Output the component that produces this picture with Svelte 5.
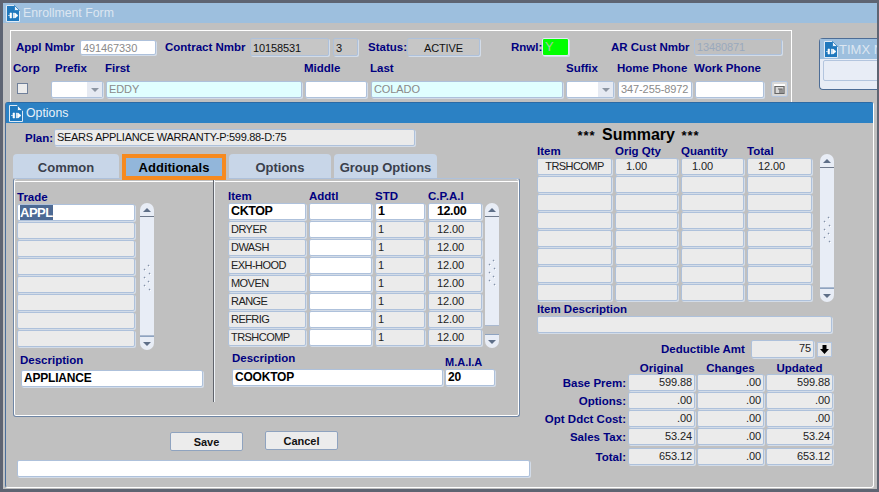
<script>
  const trade = ['APPL', '', '', '', '', '', '', ''];
  const items = ['DRYER', 'DWASH', 'EXH-HOOD', 'MOVEN', 'RANGE', 'REFRIG', 'TRSHCOMP'];
  const summaryBlank = [1, 2, 3, 4, 5, 6, 7];
  const totals = [
    ['Base Prem:', '599.88', '.00', '599.88'],
    ['Options:', '.00', '.00', '.00'],
    ['Opt Ddct Cost:', '.00', '.00', '.00'],
    ['Sales Tax:', '53.24', '.00', '53.24'],
    ['Total:', '653.12', '.00', '653.12']
  ];
  const gripDots = [[1, 9], [5, 5], [6, 13], [1, 17], [5, 21], [1, 25], [6, 29]];
</script>

{#snippet winIcon()}
  <svg class="winicon" width="14" height="17" viewBox="0 0 14 17">
    <path d="M.5 .5H8.5L13.5 5.5V16.5H.5Z" fill="#1f78bd" stroke="#dfeaf5" stroke-width="1"/>
    <path d="M8.5 .5V5.5H13.5Z" fill="#eaf2fa" stroke="#1f78bd" stroke-width=".8"/>
    <path d="M2 10.5H4M4 8H5.6V13H4ZM7.5 8H8.4V13H7.5ZM9 8L12 10.5L9 13Z" fill="#fff" stroke="#fff" stroke-width=".6"/>
  </svg>
{/snippet}

{#snippet scroll(height, thumb)}
  <div class="scroll" style="height:{height}px">
    <div class="cap up"><i></i></div>
    <div class="track" style="height:{thumb}px">
      <svg class="grip" width="9" height="32" viewBox="0 0 9 32">
        {#each gripDots as d}
          <path d="M{d[0]} {d[1] + 1}L{d[0] + 1} {d[1]}" stroke="#8492a8" stroke-width="1.2"/>
          <path d="M{d[0] + 1} {d[1] + 2}L{d[0] + 2} {d[1] + 1}" stroke="#fff" stroke-width="1"/>
        {/each}
      </svg>
    </div>
    <div class="spacer"></div>
    <div class="cap down"><i></i></div>
  </div>
{/snippet}

<div class="desktop">
  <header class="maintitle">{@render winIcon()}<span>Enrollment Form</span></header>

  <section class="enroll">
    <div class="row1">
      <label class="l1">Appl Nmbr</label><div class="f w76 white dim">491467330</div>
      <label class="l2">Contract Nmbr</label><div class="f w79 silverf">10158531</div><div class="f w25 silverf">3</div>
      <label class="l3">Status:</label><div class="f w73 silverf ctr">ACTIVE</div>
      <label class="l4">Rnwl:</label><div class="f green">Y</div>
      <label class="l5">AR Cust Nmbr</label><div class="f w88 silver dimblue">13480871</div>
    </div>
    <div class="row2">
      <label style="width:42px">Corp</label><label style="width:50px">Prefix</label><label style="width:199px">First</label><label style="width:66px">Middle</label><label style="width:196px">Last</label><label style="width:51px">Suffix</label><label style="width:77px">Home Phone</label><label>Work Phone</label>
    </div>
    <div class="row3">
      <div class="check"></div>
      <div class="f combo"><span class="drop"><i></i></span></div>
      <div class="f cyan dim w196">EDDY</div>
      <div class="f white w62"></div>
      <div class="f cyan dim w192">COLADO</div>
      <div class="f combo suf"><span class="drop"><i></i></span></div>
      <div class="f white dim w74">347-255-8972</div>
      <div class="f white w69"></div>
      <div class="calc"><svg width="11" height="10" viewBox="0 0 11 10"><path d="M0 0H11V2H0Z" fill="#fff"/><path d="M1 2.5H10V9.5H1ZM4 5H8V9.5M6 5V9.5" fill="none" stroke="#666" stroke-width="1.2"/></svg></div>
    </div>
  </section>

  <aside class="timx">
    <header>{@render winIcon()}<span>TIMX N</span></header>
    <div class="timxfield"></div>
  </aside>

  <section class="options">
    <header class="opttitle">{@render winIcon()}<span>Options</span></header>
    <div class="optbody">
      <div class="leftcol">
        <div class="plan"><label>Plan:</label><div class="f planf">SEARS APPLIANCE WARRANTY-P:599.88-D:75</div></div>
        <nav class="tabs">
          <div class="tab w106">Common</div>
          <div class="tab active">Additionals</div>
          <div class="tab w102">Options</div>
          <div class="tab w103">Group Options</div>
        </nav>
        <div class="panel">
          <div class="tradecol">
            <div class="tradelist">
              <div>
                <label class="hd">Trade</label>
                <div class="f w118 white big"><span class="sel">APPL</span></div>
                {#each trade.slice(1) as t}<div class="f w118 grey mt"></div>{/each}
              </div>
              {@render scroll(145, 119)}
            </div>
            <label class="hd desc1">Description</label>
            <div class="f white bold w182">APPLIANCE</div>
          </div>
          <div class="divider"></div>
          <div class="itemcol">
            <div class="itemwrap">
              <div>
                <div class="grid itemhd"><label>Item</label><label>Addtl</label><label>STD</label><label>C.P.A.I</label></div>
                <div class="grid">
                  <div class="f white bigb">CKTOP</div><div class="f white"></div><div class="f white bigb">1</div><div class="f white bigb pad8">12.00</div>
                </div>
                {#each items as it}
                  <div class="grid mt">
                    <div class="f grey tight">{it}</div><div class="f white"></div><div class="f grey">1</div><div class="f grey pad8">12.00</div>
                  </div>
                {/each}
              </div>
              <div class="itemscroll">{@render scroll(145, 109)}</div>
            </div>
            <div class="descrow">
              <div><label class="hd d2">Description</label><div class="f white bold w211">COOKTOP</div></div>
              <div class="maia"><label class="hd small">M.A.I.A</label><div class="f white bold w50">20</div></div>
            </div>
          </div>
        </div>
        <div class="buttons"><button class="save">Save</button><button class="cancel">Cancel</button></div>
        <div class="f white status"></div>
      </div>

      <div class="rightcol">
        <h2><span>***</span> Summary <span>***</span></h2>
        <div class="sumwrap">
          <div>
            <div class="sumgrid sumhd"><label>Item</label><label>Orig Qty</label><label>Quantity</label><label>Total</label></div>
            <div class="sumgrid">
              <div class="f grey ctr tight">TRSHCOMP</div><div class="f grey q">1.00</div><div class="f grey q">1.00</div><div class="f grey q">12.00</div>
            </div>
            {#each summaryBlank as r}
              <div class="sumgrid mt"><div class="f grey"></div><div class="f grey"></div><div class="f grey"></div><div class="f grey"></div></div>
            {/each}
          </div>
          <div class="sumscroll">{@render scroll(146, 120)}</div>
        </div>
        <label class="hd itemdesc">Item Description</label>
        <div class="f grey w295"></div>
        <div class="ded">
          <label>Deductible Amt</label>
          <div class="f grey num w63">75</div>
          <div class="arrowbtn"><svg width="11" height="11" viewBox="0 0 11 11"><path d="M3.5 1H7.5V5H10L5.5 10L1 5H3.5Z" fill="#000"/></svg></div>
        </div>
        <div class="totals tothd"><span></span><label>Original</label><label>Changes</label><label>Updated</label></div>
        {#each totals as t, i}
          <div class="totals" class:gap={i > 0} class:gaplast={i === 4}>
            <label class="rowl">{t[0]}</label>
            <div class="f grey num">{t[1]}</div><div class="f grey num">{t[2]}</div><div class="f grey num">{t[3]}</div>
          </div>
        {/each}
      </div>
    </div>
  </section>
</div>

<style>
  :global(body) { margin: 0; }
  .desktop {
    position: relative; width: 879px; height: 492px; box-sizing: border-box; overflow: hidden;
    background: #c0c0c0; font: 11px "Liberation Sans", Arial, sans-serif; color: #222;
    border-top: 3px solid #5e6472; border-left: 3px solid #5e6472; border-right: 2px solid #5e6472; border-bottom: 3px solid #5e6472;
  }
  label { font-weight: bold; font-size: 11.5px; color: #000080; white-space: nowrap; display: block; line-height: 14px; }
  .winicon { flex: none; margin-right: 3px; }

  .maintitle { height: 20px; background: #9dbfde; color: #dce6f1; display: flex; align-items: center; font-size: 12.3px; padding-left: 3px; }

  .f {
    box-sizing: border-box; height: 17px; line-height: 15px; border: 1px solid #aec1db; border-radius: 2px;
    padding: 0 2px; font-size: 11px; letter-spacing: -.1px; white-space: nowrap; overflow: hidden; flex: none;
    box-shadow: 1px 1px 0 #d3dce8;
  }
  .white { background: #fff; color: #111; }
  .grey { background: #ebebeb; color: #222; }
  .silverf { background: #c6c6c6; color: #111; }
  .silver { background: #c0c0c0; }
  .cyan { background: #e0ffff; }
  .dim { color: #8a8a8a; }
  .dimblue { color: #9aa9bd; }
  .ctr { text-align: center; }
  .bold { font-weight: bold; font-size: 12px; letter-spacing: -.2px; color: #000; }
  .num { text-align: right; }
  .mt { margin-top: 1px; }
  .tight { letter-spacing: -.55px; }

  .enroll {
    position: absolute; left: 7px; top: 27px; width: 782px; height: 80px; box-sizing: border-box;
    border-top: 1px solid #fff; border-left: 1px solid #fff; border-right: 1px solid #fff;
    padding-top: 7px;
  }
  .row1 { display: flex; align-items: center; height: 18px; }
  .row1 label { line-height: 16px; }
  .l1 { margin-left: 5px; width: 64px; }
  .l2 { margin-left: 9px; width: 85px; }
  .l3 { margin-left: 10px; width: 39px; }
  .l4 { margin-left: 31px; width: 31px; }
  .l5 { margin-left: 42px; width: 83px; }
  .w76 { width: 76px; height: 15px; line-height: 14px; }
  .w79 { width: 79px; height: 18px; line-height: 18px; }
  .w25 { width: 25px; height: 18px; line-height: 18px; margin-left: 4px; }
  .w73 { width: 73px; height: 18px; line-height: 18px; }
  .green { width: 27px; height: 18px; background: #00ff00; color: #a6c8a6; border-color: #e3ebf5; font-size: 13px; }
  .w88 { width: 88px; height: 16px; line-height: 14px; }
  .row2 { display: flex; margin-top: 5px; padding-left: 2px; }
  .row3 { display: flex; align-items: flex-start; margin-top: 6px; padding-left: 6px; height: 17px; }
  .check { width: 9px; height: 9px; margin-top: 2px; background: #ececec; border: 1px solid #70809a; margin-right: 23px; flex: none; }
  .combo { width: 52px; background: #fff; display: flex; justify-content: flex-end; padding: 0; margin-right: 3px; }
  .suf { width: 48px; margin-left: 3px; margin-right: 4px; }
  .drop { width: 15px; background: #e6eaf2; display: flex; align-items: center; justify-content: center; }
  .drop i { border: 4px solid transparent; border-top: 4px solid #8d96a3; border-bottom: 0; }
  .w196 { width: 196px; margin-right: 3px; }
  .w62 { width: 62px; margin-right: 4px; }
  .w192 { width: 192px; }
  .w74 { width: 74px; margin-right: 3px; }
  .w69 { width: 69px; margin-right: 7px; }
  .calc { width: 17px; height: 16px; box-sizing: border-box; background: #d8d8d8; border: 1px solid #b3c5de; border-radius: 2px; display: flex; align-items: center; justify-content: center; }

  .timx { position: absolute; left: 816px; top: 35px; width: 70px; height: 52px; background: #e8edf6; border: 1px solid #4d6d96; border-right: 0; border-radius: 4px 0 0 4px; box-sizing: border-box; }
  .timx header { height: 20px; background: #9dbfde; color: #dce6f1; display: flex; align-items: center; font-size: 13px; padding-left: 4px; }
  .timx .winicon { margin-right: 1px; }
  .timxfield { margin: 1px 0 0 3px; height: 19px; background: #e8edf6; border: 1px solid #b3c5de; border-radius: 2px; }

  .options {
    position: absolute; left: 2px; top: 99px; width: 869px; height: 386px; box-sizing: border-box;
    background: #c0c0c0; border: 1px solid #4a6f9c; border-top-color: #2b6aa5; border-right-color: #fff; border-bottom-color: #fff;
    border-radius: 3px;
  }
  .opttitle { height: 20px; background: #2b81c4; color: #e8f2fa; display: flex; align-items: center; font-size: 12.3px; padding-left: 3px; }
  .optbody { display: flex; }
  .leftcol { width: 530px; flex: none; }
  .plan { display: flex; align-items: center; margin: 6px 0 0 19px; height: 17px; }
  .plan label { width: 29px; }
  .planf { width: 361px; background: #ebebeb; color: #111; letter-spacing: -.3px; }
  .tabs { display: flex; margin: 8px 0 0 7px; gap: 3px; height: 26px; position: relative; z-index: 1; }
  .tab {
    box-sizing: border-box; height: 24px; background: #c8d6e8; border-radius: 4px 4px 0 0; text-align: center;
    font-weight: bold; font-size: 13px; color: #3a3f4c; line-height: 27px; overflow: hidden;
  }
  .w106 { width: 106px; }
  .w102 { width: 102px; }
  .w103 { width: 103px; }
  .tab.active { width: 104px; height: 26px; background: #92b6da; border: 4px solid #f68a1f; border-radius: 0; color: #000; line-height: 19px; }
  .panel {
    margin: -2px 0 0 7px; width: 507px; height: 239px; box-sizing: border-box; position: relative;
    border: 1px solid #6f86a5; border-top-color: #aec1db; border-radius: 3px; display: flex;
    box-shadow: inset 1px 0 0 #fff, inset -1px 0 0 #fff, inset 0 -1px 0 #fff, inset 0 2px 0 #c0c0c0, inset 0 3px 0 #fff;
  }
  .tradecol { width: 200px; flex: none; }
  .tradelist { display: flex; gap: 5px; padding-left: 3px; padding-top: 12px; }
  .hd { line-height: 13px; }
  .w118 { width: 118px; }
  .big { font-size: 13px; font-weight: bold; letter-spacing: -.5px; color: #000; }
  .sel { background: #4d6a94; color: #fff; }
  .tradelist > .scroll { margin-top: 12px; }
  .desc1 { margin: 6px 0 3px 6px; }
  .w182 { width: 182px; margin-left: 7px; }
  .divider { width: 1px; height: 223px; background: #eef2f7; box-shadow: -1px 0 0 #60646c; }
  .itemcol { flex: 1; }
  .itemwrap { display: flex; padding-top: 10px; padding-left: 13px; }
  .grid { display: grid; grid-template-columns: 78px 63px 50px 54px; column-gap: 3px; }
  .itemhd { height: 14px; }
  .bigb { font-size: 12.5px; font-weight: bold; letter-spacing: -.4px; color: #000; }
  .pad8 { padding-left: 8px; }
  .itemscroll { margin: 14px 0 0 3px; }
  .descrow { display: flex; padding-left: 14px; align-items: flex-end; margin-top: 4px; }
  .d2 { margin: 0 0 4px 3px; }
  .descrow > div:first-child .f { margin-left: 3px; }
  .w211 { width: 211px; }
  .maia { margin-left: 2px; }
  .small { font-size: 11px; margin-bottom: 0; }
  .w50 { width: 50px; }
  .buttons { display: flex; margin: 14px 0 0 164px; align-items: flex-start; }
  button { font: bold 11px "Liberation Sans", Arial, sans-serif; color: #111; background: #ececec; border: 1px solid #8fa3bf; border-radius: 2px; padding: 0; box-sizing: border-box; }
  .save { width: 73px; height: 19px; margin-top: 1px; }
  .cancel { width: 73px; height: 19px; margin-left: 22px; }
  .status { width: 513px; margin: 9px 0 0 11px; }

  .rightcol { width: 300px; margin-left: 1px; }
  h2 { margin: 2px 0 0 -1px; height: 20px; width: 205px; font-size: 16px; line-height: 20px; text-align: center; color: #000; }
  h2 span { font-size: 13px; font-weight: bold; letter-spacing: 1px; margin: 0 2px; }
  .sumwrap { display: flex; }
  .sumgrid { display: grid; grid-template-columns: 75px 63px 63px 65px; column-gap: 3px; }
  .sumhd { height: 13px; }
  .sumhd label { line-height: 13px; }
  .q { padding-left: 10px; }
  .sumscroll { margin: 9px 0 0 8px; }
  .itemdesc { margin-top: 1px; height: 14px; line-height: 14px; }
  .w295 { width: 295px; }
  .ded { display: flex; align-items: center; margin-top: 7px; padding-left: 124px; }
  .ded label { width: 90px; }
  .w63 { width: 63px; height: 18px; }
  .arrowbtn { width: 15px; height: 15px; margin-left: 3px; background: #e8e8e8; border: 1px solid #b3c5de; box-sizing: border-box; display: flex; align-items: center; justify-content: center; }
  .totals { display: grid; grid-template-columns: 89px 67px 67px 67px; column-gap: 2px; align-items: center; width: 300px; }
  .tothd { height: 14px; margin-top: 3px; margin-bottom: -1px; }
  .tothd label { text-align: center; }
  .rowl { text-align: right; }
  .totals .f { padding-right: 2px; }
  .gap { margin-top: 1px; }
  .gaplast { margin-top: 3px; }

  .scroll { width: 14px; display: flex; flex-direction: column; }
  .cap { height: 14px; background: #e8edf6; display: flex; align-items: center; justify-content: center; flex: none; box-sizing: border-box; }
  .cap.up { border-radius: 7px 7px 0 0; border-bottom: 1px solid #6f7a8c; }
  .cap.down { border-radius: 0 0 7px 7px; border-top: 1px solid #8ea3c0; }
  .cap i { border: 4px solid transparent; }
  .up i { border-top: 0; border-bottom: 4px solid #5e6f88; }
  .down i { border-bottom: 0; border-top: 4px solid #5e6f88; }
  .track { background: #e8edf6; flex: none; display: flex; align-items: center; justify-content: center; border-bottom: 1px solid #aab9cf; box-sizing: border-box; }
  .spacer { flex: 1; min-height: 0; }
</style>
